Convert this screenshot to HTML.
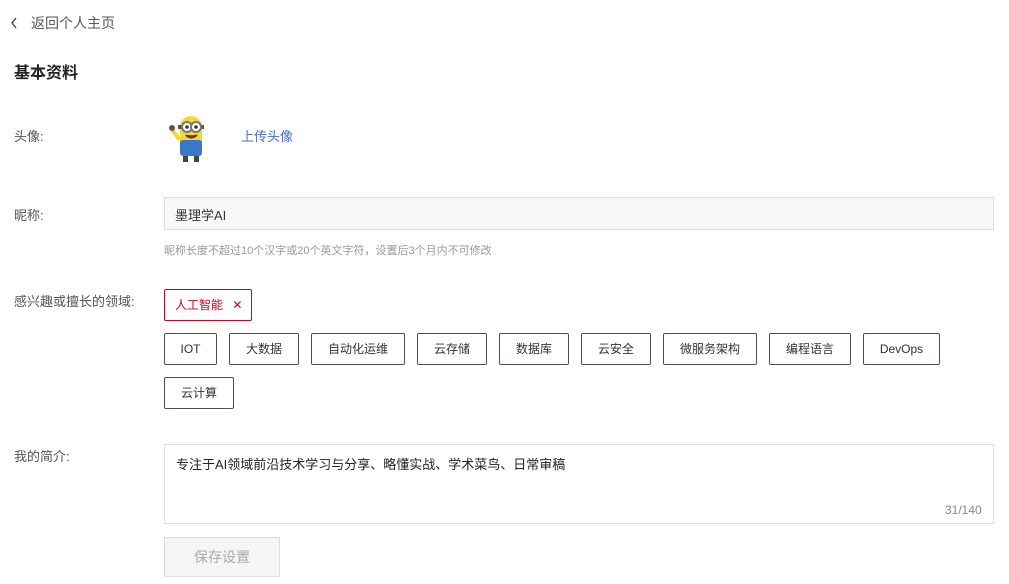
<!DOCTYPE html>
<html><head><meta charset="utf-8"><style>
body{margin:0;width:1009px;height:584px;background:#fff;font-family:"Liberation Sans","Noto Sans CJK SC",sans-serif;position:relative;overflow:hidden;color:#333}
.a{position:absolute;white-space:nowrap}
.lbl{font-size:13px;color:#555}
.tag{position:absolute;height:32px;border:1px solid #4a4f5c;border-radius:2px;box-sizing:border-box;font-size:12px;color:#333;text-align:center;line-height:30px;top:333px}
</style></head><body>
<svg class="a" style="left:10px;top:17px" width="8" height="12" viewBox="0 0 8 12"><path d="M6 1 L2 6 L6 11" stroke="#555" stroke-width="1.5" fill="none"/></svg>
<div class="a" style="left:31px;top:13px;font-size:14px;color:#555">返回个人主页</div>
<div class="a" style="left:14px;top:59px;font-size:16px;font-weight:bold;color:#222">基本资料</div>
<div class="a lbl" style="left:14px;top:126px">头像:</div>
<svg class="a" style="left:166px;top:110px" width="50" height="56" viewBox="0 0 50 56">
<rect x="14" y="6" width="22" height="40" rx="11" fill="#f5d836"/>
<rect x="14" y="30" width="22" height="16" rx="3" fill="#3a78c9"/>
<rect x="12" y="15" width="26" height="4" fill="#555"/>
<circle cx="21" cy="17" r="5" fill="#fff" stroke="#777" stroke-width="2"/><circle cx="30" cy="17" r="5" fill="#fff" stroke="#777" stroke-width="2"/>
<circle cx="21" cy="17" r="1.8" fill="#432"/><circle cx="30" cy="17" r="1.8" fill="#432"/>
<path d="M20 25 Q25 30 31 25" stroke="#633" stroke-width="2" fill="#c33"/>
<path d="M14 30 L6 20" stroke="#f5d836" stroke-width="4"/><circle cx="6" cy="18" r="3" fill="#555"/>
<rect x="17" y="46" width="5" height="6" fill="#444"/><rect x="28" y="46" width="5" height="6" fill="#444"/>
</svg>
<div class="a" style="left:241px;top:126px;font-size:13px;color:#4a6bd8">上传头像</div>
<div class="a lbl" style="left:14px;top:205px">昵称:</div>
<div class="a" style="left:164px;top:197px;width:830px;height:33px;box-sizing:border-box;border:1px solid #ddd;background:#f8f8f8;font-size:13px;color:#333;padding:7px 10px">墨理学AI</div>
<div class="a" style="left:164px;top:242px;font-size:11px;color:#999">昵称长度不超过10个汉字或20个英文字符，设置后3个月内不可修改</div>
<div class="a lbl" style="left:14px;top:291px">感兴趣或擅长的领域:</div>
<div class="a" style="left:164px;top:289px;width:88px;height:32px;box-sizing:border-box;border:1px solid #d0021b;border-radius:2px;font-size:12px;color:#d0021b;line-height:30px;padding-left:10px">人工智能 <span style="margin-left:6px">✕</span></div>
<div class="tag" style="left:164px;width:53px">IOT</div>
<div class="tag" style="left:229px;width:70px">大数据</div>
<div class="tag" style="left:311px;width:94px">自动化运维</div>
<div class="tag" style="left:417px;width:70px">云存储</div>
<div class="tag" style="left:499px;width:70px">数据库</div>
<div class="tag" style="left:581px;width:70px">云安全</div>
<div class="tag" style="left:663px;width:94px">微服务架构</div>
<div class="tag" style="left:769px;width:82px">编程语言</div>
<div class="tag" style="left:863px;width:77px">DevOps</div>
<div class="tag" style="left:164px;width:70px;top:377px">云计算</div>
<div class="a lbl" style="left:14px;top:446px">我的简介:</div>
<div class="a" style="left:164px;top:444px;width:830px;height:80px;box-sizing:border-box;border:1px solid #ddd;font-size:13px;color:#222;padding:9px 11px">专注于AI领域前沿技术学习与分享、略懂实战、学术菜鸟、日常审稿</div>
<div class="a" style="left:945px;top:503px;font-size:12px;color:#888">31/140</div>
<div class="a" style="left:164px;top:537px;width:116px;height:40px;box-sizing:border-box;border:1px solid #ddd;background:#f5f5f5;font-size:14px;color:#aaa;text-align:center;line-height:38px">保存设置</div>
</body></html>
